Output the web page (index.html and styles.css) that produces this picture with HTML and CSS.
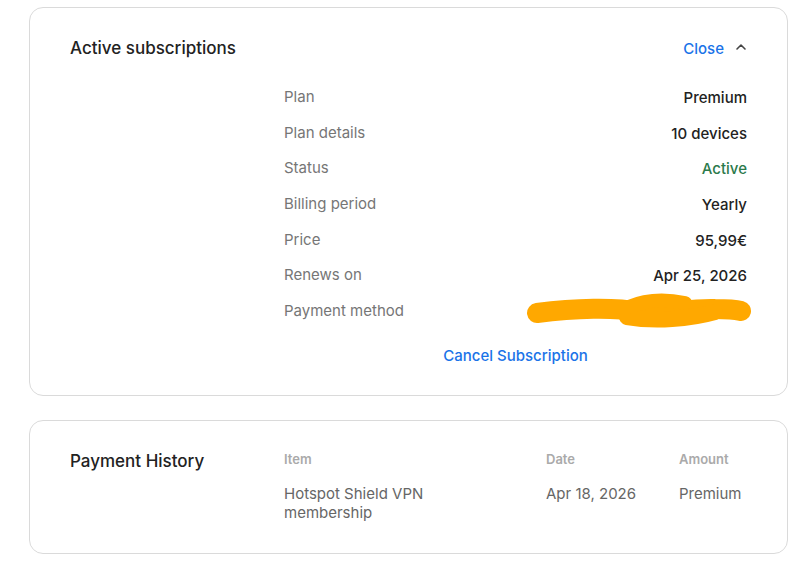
FILE: index.html
```html
<!DOCTYPE html>
<html lang="en">
<head>
  <meta charset="UTF-8">
  <meta name="viewport" content="width=device-width, initial-scale=1.0">
  <title>Subscriptions</title>
  <link rel="stylesheet" href="styles.css">
</head>
<body>

  <div class="page">
    <!-- Suscripciones activas -->
    <section class="card">
      <div class="card-header">
        <h2 class="card-title">Active subscriptions</h2>
        <button class="toggle">
          Close
          <svg class="chevron" width="12" height="8" viewBox="0 0 12 8">
            <path d="M2 6 L6 2 L10 6" fill="none" stroke="#444" stroke-width="1.6" stroke-linecap="round" stroke-linejoin="round"/>
          </svg>
        </button>
      </div>

      <div class="details">
        <div class="row"><span class="label">Plan</span><span class="value">Premium</span></div>
        <div class="row"><span class="label">Plan details</span><span class="value">10 devices</span></div>
        <div class="row"><span class="label">Status</span><span class="value active">Active</span></div>
        <div class="row"><span class="label">Billing period</span><span class="value">Yearly</span></div>
        <div class="row"><span class="label">Price</span><span class="value">95,99€</span></div>
        <div class="row"><span class="label">Renews on</span><span class="value">Apr 25, 2026</span></div>
        <div class="row">
          <span class="label">Payment method</span>
          <svg class="redacted" width="228" height="36" viewBox="0 0 228 36">
            <path d="M12 20 C50 15 90 14 115 19 C140 23 160 15 190 16 C205 16 212 17 216 18" fill="none" stroke="#ffa800" stroke-width="20" stroke-linecap="round"/>
            <path d="M102 24 C130 29 165 26 190 19" fill="none" stroke="#ffa800" stroke-width="16" stroke-linecap="round"/>
            <path d="M104 14 C120 7 140 6 160 10" fill="none" stroke="#ffa800" stroke-width="14" stroke-linecap="round"/>
          </svg>
        </div>
        <div class="cancel-wrap">
          <a href="#" class="cancel">Cancel Subscription</a>
        </div>
      </div>
    </section>

    <!-- Historial de pagos -->
    <section class="card history">
      <div class="history-grid">
        <h2 class="card-title">Payment History</h2>
        <div class="table">
          <div class="th col-item">Item</div>
          <div class="th col-date">Date</div>
          <div class="th col-amount">Amount</div>
          <div class="td col-item">Hotspot Shield VPN membership</div>
          <div class="td col-date">Apr 18, 2026</div>
          <div class="td col-amount">Premium</div>
        </div>
      </div>
    </section>
  </div>

</body>
</html>
```

FILE: styles.css
```css
/* Estilos generales */
body {
  font-family: Inter, "Noto Sans", sans-serif;
  background-color: #ffffff;
  color: #222;
  margin: 0;
  padding: 0;
}

.page {
  width: 759px;
  padding: 7px 0 0 29px;
  display: flex;
  flex-direction: column;
  gap: 24px;
}

.card {
  border: 1px solid #dadada;
  border-radius: 14px;
  padding: 28px 40px 29px 40px;
}

.card-header {
  display: flex;
  justify-content: space-between;
  align-items: center;
}

.card-title {
  margin: 0;
  font-size: 17px;
  font-weight: 500;
  line-height: 24px;
  color: #222;
}

.toggle {
  background: none;
  border: none;
  padding: 0;
  font: inherit;
  font-size: 15px;
  font-weight: 500;
  color: #1a73e8;
  display: flex;
  align-items: center;
  gap: 11px;
  cursor: pointer;
}

.chevron {
  margin-top: -3px;
}

/* Detalles */
.details {
  margin: 19px 0 0 214px;
}

.row {
  display: flex;
  justify-content: space-between;
  align-items: center;
  height: 35.7px;
  font-size: 15px;
}

.label {
  color: #767676;
  margin-top: -1px;
}

.value {
  font-weight: 500;
  color: #222;
  margin-top: 1px;
}

.value.active {
  color: #2b7a4b;
}

.redacted {
  margin-right: -6px;
}

.cancel-wrap {
  text-align: center;
  margin-top: 16px;
  line-height: 20px;
}

.cancel {
  color: #1a73e8;
  font-size: 15px;
  font-weight: 500;
  text-decoration: none;
}

/* Historial */
.history {
  padding-bottom: 31px;
}

.history-grid {
  display: flex;
}

.history-grid .card-title {
  width: 214px;
  flex-shrink: 0;
}

.table {
  display: grid;
  grid-template-columns: 262px 133px 1fr;
  row-gap: 16px;
  flex: 1;
}

.th {
  font-size: 13px;
  font-weight: 600;
  color: #aaa;
  line-height: 18px;
  padding-top: 1px;
}

.td {
  font-size: 15px;
  color: #666;
  line-height: 19px;
}

.td.col-item {
  width: 160px;
}
```
